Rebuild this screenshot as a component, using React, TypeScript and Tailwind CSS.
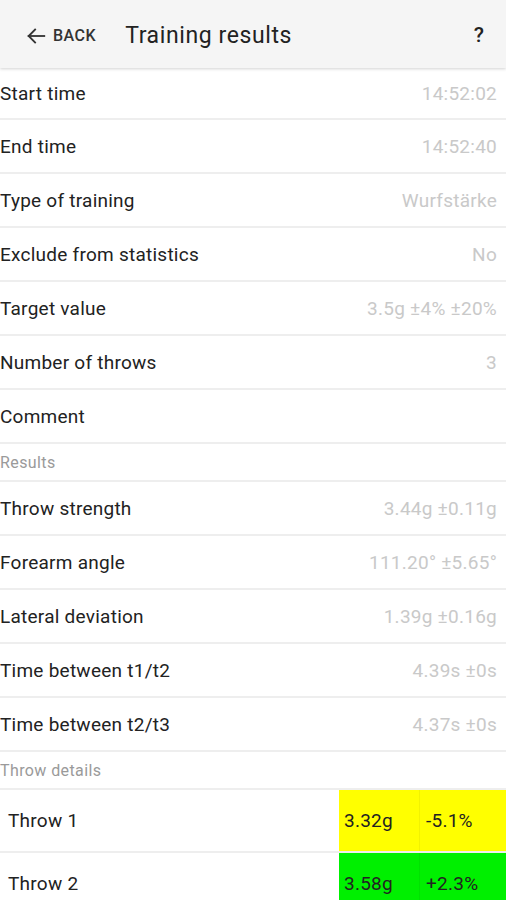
import React from "react";

const rows1: [string, string][] = [
  ["Start time", "14:52:02"],
  ["End time", "14:52:40"],
  ["Type of training", "Wurfstärke"],
  ["Exclude from statistics", "No"],
  ["Target value", "3.5g ±4% ±20%"],
  ["Number of throws", "3"],
  ["Comment", ""],
];

const rows2: [string, string][] = [
  ["Throw strength", "3.44g ±0.11g"],
  ["Forearm angle", "111.20° ±5.65°"],
  ["Lateral deviation", "1.39g ±0.16g"],
  ["Time between t1/t2", "4.39s ±0s"],
  ["Time between t2/t3", "4.37s ±0s"],
];

function Row({ label, value, first }: { label: string; value: string; first?: boolean }) {
  return (
    <div className={`flex items-center justify-between border-b-2 border-[#eeeeee] pr-[9px] pt-[2px] ${first ? "h-[52px]" : "h-[54px]"}`}>
      <span className="text-[19px] tracking-[0.25px] text-[#222222]">{label}</span>
      <span className="text-[19px] tracking-[0.25px] text-[#c9c9c9]">{value}</span>
    </div>
  );
}

function Section({ title }: { title: string }) {
  return (
    <div className="flex h-[38px] items-center border-b-2 border-[#eeeeee] pt-[2px]">
      <span className="text-[16px] tracking-[0.4px] text-[#9a9a9a]">{title}</span>
    </div>
  );
}

function Throw({ label, v, p, color }: { label: string; v: string; p: string; color: string }) {
  return (
    <div className="flex h-[63px] border-b-2 border-[#eeeeee]">
      <div className="flex flex-1 items-center pl-[8px] pt-[2px] text-[19px] tracking-[0.25px] text-[#222222]">{label}</div>
      <div className={`flex w-[81px] items-center pl-[5px] pt-[2px] text-[19px] tracking-[0.25px] text-[#222222] border-r border-black/5 ${color}`}>{v}</div>
      <div className={`flex w-[86px] items-center pl-[6px] pt-[2px] text-[19px] tracking-[0.25px] text-[#222222] ${color}`}>{p}</div>
    </div>
  );
}

export default function App() {
  return (
    <div className="w-[506px] h-[900px] overflow-hidden bg-white" style={{ fontFamily: "Roboto, 'Noto Sans', sans-serif" }}>
      <div className="relative z-10 flex h-[68px] items-center bg-[#f5f5f5] pt-[4px] shadow-[0_1px_3px_rgba(0,0,0,0.18)]">
        <div className="flex items-center pl-[25px]">
          <svg width="22" height="22" viewBox="0 0 24 24" fill="none" stroke="#333" strokeWidth="2" strokeLinecap="square">
            <path d="M21 12H4" />
            <path d="M11 5l-7 7 7 7" />
          </svg>
          <span className="ml-[6px] text-[16px] font-medium tracking-[0.5px] text-[#333333]">BACK</span>
        </div>
        <span className="ml-[29px] text-[23px] tracking-[0.6px] text-[#222222]">Training results</span>
        <span className="ml-auto mr-[22px] text-[21px] font-medium text-[#222222]">?</span>
      </div>
      <div>
        {rows1.map(([l, v], i) => (
          <Row key={l} label={l} value={v} first={i === 0} />
        ))}
        <Section title="Results" />
        {rows2.map(([l, v]) => (
          <Row key={l} label={l} value={v} />
        ))}
        <Section title="Throw details" />
        <Throw label="Throw 1" v="3.32g" p="-5.1%" color="bg-[#ffff00]" />
        <Throw label="Throw 2" v="3.58g" p="+2.3%" color="bg-[#00f000]" />
      </div>
    </div>
  );
}
